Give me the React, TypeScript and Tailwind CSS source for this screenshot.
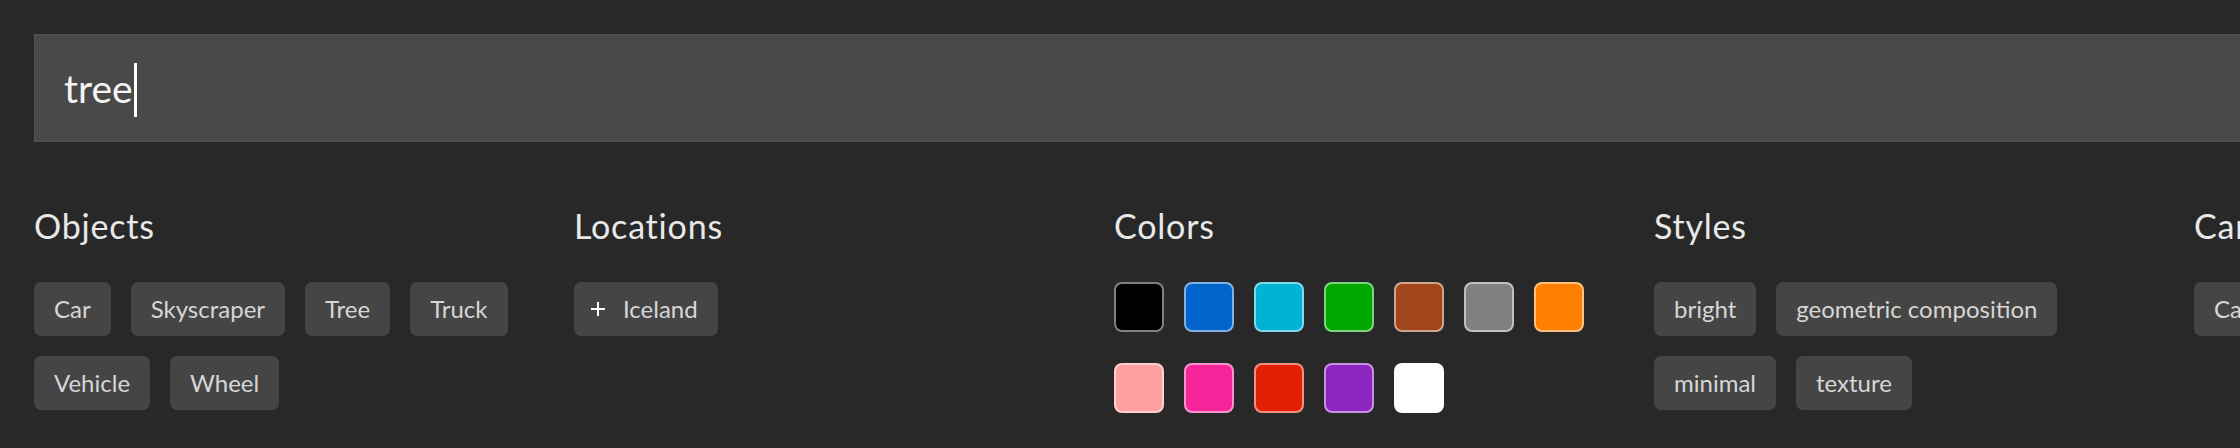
import React from 'react';

const objects = ['Car', 'Skyscraper', 'Tree', 'Truck', 'Vehicle', 'Wheel'];
const styles = ['bright', 'geometric composition', 'minimal', 'texture'];

const swatches = [
  '#000000', '#0064cc', '#00b2d6', '#00a800', '#a0461a', '#808080', '#ff8000',
  '#ffa0a0', '#f7259a', '#e21f00', '#8c24c0', '#ffffff',
];

const Chip: React.FC<{ children: React.ReactNode; plus?: boolean }> = ({ children, plus }) => (
  <button
    className={`h-[54px] flex items-center rounded-[7px] bg-[#454545] text-[24px] text-[#d6d6d6] leading-none ${
      plus ? 'pl-4 pr-5' : 'px-5'
    }`}
  >
    {plus && (
      <svg width="16" height="16" viewBox="0 0 16 16" className="mr-[17px]">
        <path d="M8 1v14M1 8h14" stroke="#ffffff" strokeWidth="2" fill="none" />
      </svg>
    )}
    <span>{children}</span>
  </button>
);

const Column: React.FC<{ title: string; children: React.ReactNode }> = ({ title, children }) => (
  <section className="w-[540px] shrink-0 pr-5">
    <h2 className="text-[34px] leading-[40px] tracking-[0.8px] text-[#e8e8e8] mb-9">{title}</h2>
    {children}
  </section>
);

export default function App() {
  return (
    <div className="w-full h-[448px] overflow-hidden bg-[#282828] font-['Lato',sans-serif]">
      <div className="w-[2900px] pt-[34px] pl-[34px]">
        {/* search field */}
        <div className="h-[108px] w-[2800px] flex items-center bg-[#494949] border border-[#515151] pl-[29px]">
          <span className="text-[39px] text-[#f4f4f4] leading-none">tree</span>
          <span className="ml-[1px] mt-[4px] h-[54px] w-[3px] bg-white" />
        </div>

        <div className="flex mt-16">
          <Column title="Objects">
            <div className="flex flex-wrap gap-5">
              {objects.map((o) => (
                <Chip key={o}>{o}</Chip>
              ))}
            </div>
          </Column>

          <Column title="Locations">
            <div className="flex flex-wrap gap-5">
              <Chip plus>Iceland</Chip>
            </div>
          </Column>

          <Column title="Colors">
            <div className="grid grid-cols-[repeat(7,50px)] gap-x-5 gap-y-[31px]">
              {swatches.map((c) => (
                <div
                  key={c}
                  className="w-[50px] h-[50px] rounded-[8px] border-2 border-[#ffffff80]"
                  style={{ backgroundColor: c }}
                />
              ))}
            </div>
          </Column>

          <Column title="Styles">
            <div className="flex flex-wrap gap-5 w-[430px]">
              {styles.map((s) => (
                <Chip key={s}>{s}</Chip>
              ))}
            </div>
          </Column>

          <Column title="Camera">
            <div className="flex flex-wrap gap-5">
              <Chip>Canon</Chip>
            </div>
          </Column>
        </div>
      </div>
    </div>
  );
}
